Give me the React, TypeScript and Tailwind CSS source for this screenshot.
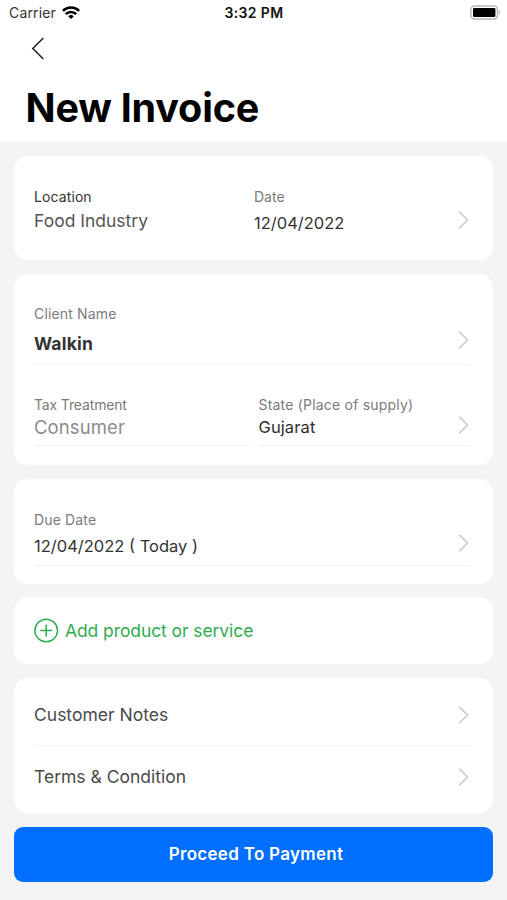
import React from "react";
import { clsx } from "clsx";

interface ChevronProps {
  className?: string;
}

function Chevron({ className }: ChevronProps) {
  return (
    <svg viewBox="0 0 11 18" fill="none" className={clsx("w-[11px] h-[18px] mr-[2px] flex-shrink-0 text-[#c4c4c6]", className)}>
      <path d="M1.2 0.8 9.6 9 1.2 17.2" stroke="currentColor" strokeWidth="1.3" />
    </svg>
  );
}

interface FieldProps {
  label: string;
  value: string;
  className?: string;
  labelClass?: string;
  valueClass?: string;
}

function Field({ label, value, className, labelClass = "text-[#7b7b7b]", valueClass }: FieldProps) {
  return (
    <div className={clsx("flex flex-col whitespace-nowrap", className)}>
      <span className={clsx("text-[14px] leading-5", labelClass)}>{label}</span>
      <span className={clsx("leading-6", valueClass)}>{value}</span>
    </div>
  );
}

interface CardProps {
  className?: string;
  children: React.ReactNode;
}

function Card({ className, children }: CardProps) {
  return <section className={clsx("rounded-[14px] bg-white pl-5 pr-[22px]", className)}>{children}</section>;
}

function StatusBar() {
  return (
    <div className="grid grid-cols-3 items-center h-[27px] pl-[9px] pr-[6px] text-[14px] text-[#111]">
      <div className="flex items-center gap-[6px] -mt-[2px]">
        <span className="text-[#333] tracking-[0.15px]">Carrier</span>
        <svg viewBox="0 0 18 13" className="w-[18px] h-[13px]" fill="none" stroke="#000" strokeWidth="2.6">
          <path d="M0.9 4.9a11.5 11.5 0 0 1 16.2 0" />
          <path d="M3.8 8.2a7.3 7.3 0 0 1 10.4 0" />
          <path d="M9 13 6.2 10.3a4 4 0 0 1 5.6 0Z" fill="#000" stroke="none" />
        </svg>
      </div>
      <span className="-ml-[2px] -mt-[2px] text-center font-semibold tracking-[0.35px]">3:32 PM</span>
      <svg viewBox="0 0 31 15" className="w-[31px] h-[15px] justify-self-end -mt-[2px]">
        <rect x="0.9" y="0.9" width="26.6" height="13" rx="3.6" fill="#fff" stroke="#b9b9b9" strokeWidth="1.5" />
        <rect x="3" y="3" width="22.4" height="8.9" rx="1.2" fill="#000" />
        <path d="M28.9 5.2c2 .8 2 3.6 0 4.4z" fill="#b9b9b9" />
      </svg>
    </div>
  );
}

export default function App() {
  return (
    <div className="flex flex-col w-[507px] h-[900px] overflow-hidden bg-[#f4f4f4] font-['Inter',sans-serif]">
      <header className="h-[141px] bg-white">
        <StatusBar />
        <button className="block ml-[31px] mt-[10px]" aria-label="Back">
          <svg viewBox="0 0 14 23" fill="none" className="w-[14px] h-[23px]">
            <path d="M12.3 1 1.8 11.5 12.3 22" stroke="#1c1c1c" strokeWidth="1.5" />
          </svg>
        </button>
        <h1 className="mt-6 ml-[25.5px] text-[39.5px] leading-[48px] font-bold tracking-[-0.2px] text-black">New Invoice</h1>
      </header>

      <main className="flex flex-col gap-[13.5px] pt-[15px] px-[14px]">
        <Card className="flex h-[104px]">
          <Field
            label="Location"
            value="Food Industry"
            className="w-[220px] pt-[31px]"
            labelClass="text-[#333] tracking-[0.1px]"
            valueClass="text-[17.5px] mt-[2px] text-[#555]"
          />
          <Field label="Date" value="12/04/2022" className="pt-[31px]" valueClass="text-[16.5px] mt-1 text-[#333]" />
          <Chevron className="ml-auto mt-[55px]" />
        </Card>

        <Card className="h-[191.5px]">
          <div className="flex h-[91.5px] border-b border-[#f3f3f3]">
            <Field
              label="Client Name"
              value="Walkin"
              className="pt-[30.5px]"
              labelClass="text-[#7b7b7b] tracking-[0.15px]"
              valueClass="text-[17.5px] mt-2 font-bold text-[#333] tracking-[0.2px]"
            />
            <Chevron className="ml-auto mt-[57.5px]" />
          </div>
          <div className="flex gap-2">
            <Field
              label="Tax Treatment"
              value="Consumer"
              className="w-[216px] h-[81px] pt-[30px] border-b border-[#f3f3f3]"
              labelClass="text-[#7b7b7b] tracking-[-0.15px]"
              valueClass="text-[18.5px] text-[#8c8c8c] tracking-[0.1px]"
            />
            <div className="flex flex-1 h-[81px] border-b border-[#f3f3f3]">
              <Field
                label="State (Place of supply)"
                value="Gujarat"
                className="pt-[30px] pl-[0.5px]"
                labelClass="text-[#7b7b7b] tracking-[0.2px]"
                valueClass="text-[16.5px] text-[#2e2e2e] tracking-[0.1px]"
              />
              <Chevron className="ml-auto mt-[50.5px]" />
            </div>
          </div>
        </Card>

        <Card className="h-[105px]">
          <div className="flex h-[87px] border-b border-[#f3f3f3]">
            <Field
              label="Due Date"
              value="12/04/2022 ( Today )"
              className="pt-[31px]"
              labelClass="text-[#7b7b7b] tracking-[0.15px]"
              valueClass="text-[16.5px] mt-1 text-[#333]"
            />
            <Chevron className="ml-auto mt-[55.5px]" />
          </div>
        </Card>

        <Card className="h-[67px]">
          <button className="flex items-center gap-[6px] h-full text-[#2fac50]">
            <svg viewBox="0 0 25 25" fill="none" className="w-[25px] h-[25px]" stroke="currentColor" strokeWidth="1.5">
              <circle cx="12.2" cy="12.5" r="11.3" />
              <path d="M12.2 6.5v12M6.2 12.5h12" />
            </svg>
            <span className="text-[17.5px] leading-6 tracking-[-0.09px]">Add product or service</span>
          </button>
        </Card>

        <Card className="h-[135.5px]">
          {["Customer Notes", "Terms & Condition"].map((item, index) => (
            <div
              key={item}
              className={clsx(
                "flex items-center justify-between text-[17.5px] text-[#4a4a4a]",
                index === 0 ? "h-[68.5px] pt-[7px] border-b border-[#f3f3f3]" : "h-[62px]"
              )}
            >
              <span>{item}</span>
              <Chevron />
            </div>
          ))}
        </Card>

        <button className="h-[55px] pt-px pl-[5px] rounded-[9px] bg-[#006eff] text-[17px] font-semibold tracking-[0.3px] text-white">
          Proceed To Payment
        </button>
      </main>
    </div>
  );
}
